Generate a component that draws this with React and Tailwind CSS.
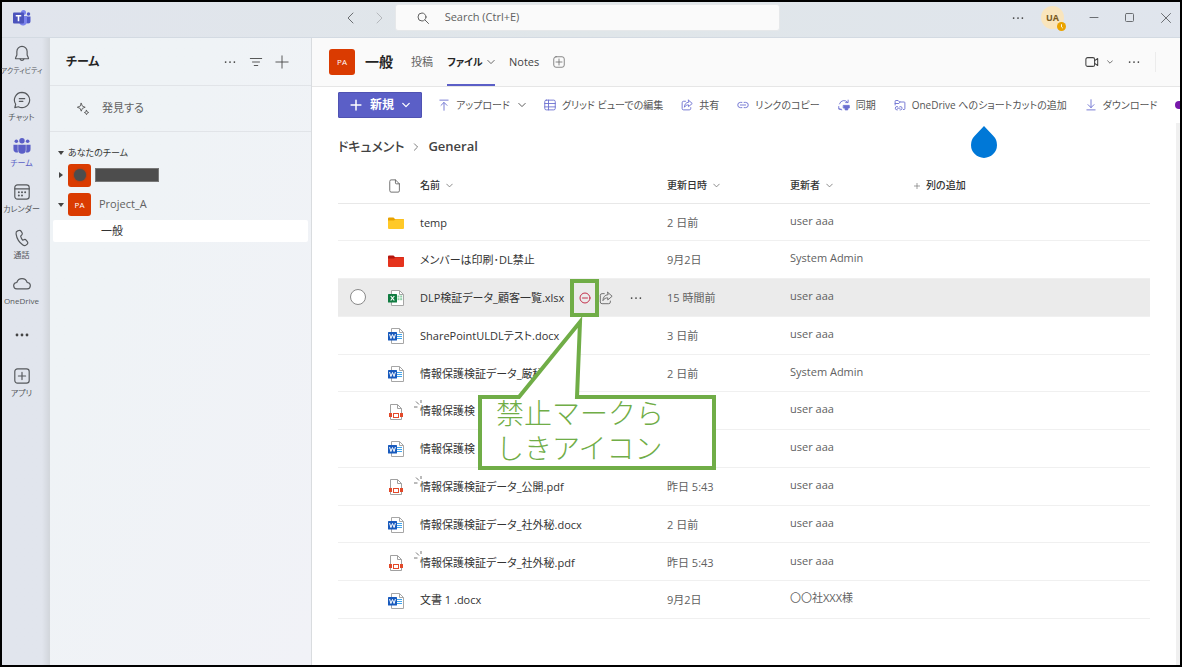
import React from "react";

function Ico({ size = "size-4", box = 16, sw = 1, className = "", children }) {
  return (
    <svg
      viewBox={`0 0 ${box} ${box}`}
      className={`${size} shrink-0 ${className}`}
      fill="none"
      stroke="currentColor"
      strokeWidth={sw}
      strokeLinecap="round"
      strokeLinejoin="round"
      aria-hidden="true"
    >
      {children}
    </svg>
  );
}

const Chevron = ({ className = "", sw = 1.2, size = "size-2" }) => (
  <Ico box={10} sw={sw} size={size} className={className}>
    <path d="M1 3l4 4 4-4" />
  </Ico>
);

const Dots = ({ size = "size-4", r = 1 }) => (
  <Ico size={size}>
    <g fill="currentColor" stroke="none">
      <circle cx="3" cy="8" r={r} />
      <circle cx="8" cy="8" r={r} />
      <circle cx="13" cy="8" r={r} />
    </g>
  </Ico>
);

function TeamsLogo() {
  return (
    <svg viewBox="0 0 36 32" className="h-4 w-[18px]" aria-hidden="true">
      <circle cx="31" cy="8" r="3.5" fill="#5059c9" />
      <path d="M25 13h10v9a5 5 0 0 1-10 0z" fill="#5059c9" />
      <circle cx="21" cy="5" r="5" fill="#7b83eb" />
      <path d="M13 12h15v11a8 8 0 0 1-15 4z" fill="#7b83eb" />
      <rect x="0" y="5" width="22" height="22" rx="2" fill="#4b53bc" />
      <path d="M5.500 10h11v3h-3.900v9.500H9.400V13H5.500z" fill="#fff" />
    </svg>
  );
}

const railItems = [
  {
    label: "アクティビティ",
    long: true,
    icon: (
      <>
        <path d="M10 1.500A5.700 5.700 0 0 0 4.300 7.200v4L2.800 14.500c-.2.400.1.800.6.800h13.200c.5 0 .8-.4.600-.8l-1.500-3.300v-4A5.700 5.700 0 0 0 10 1.500z" />
        <path d="M7.800 15.500a2.300 2.300 0 0 0 4.400 0" />
      </>
    ),
  },
  {
    label: "チャット",
    icon: (
      <>
        <path d="M10 1.500a8.500 8.500 0 1 1-4 16L2 18.500l1-3.800A8.500 8.500 0 0 1 10 1.500z" />
        <path d="M7 8.500h6M7 11.500h4" />
      </>
    ),
  },
  {
    label: "チーム",
    active: true,
    icon: (
      <g fill="currentColor" stroke="none">
        <circle cx="10" cy="4.200" r="3" />
        <circle cx="3.700" cy="4.800" r="2" />
        <circle cx="16.300" cy="4.800" r="2" />
        <path d="M5.800 8.500h8.400v6a4.200 4.200 0 0 1-8.400 0z" />
        <path d="M.5 8.500h4.700v6c0 1 .2 1.700.5 2.400A3.600 3.600 0 0 1 .5 13.500zM19.500 8.500h-4.700v6c0 1-.2 1.700-.5 2.400a3.600 3.600 0 0 0 5.200-3.400z" />
      </g>
    ),
  },
  {
    label: "カレンダー",
    icon: (
      <>
        <rect x="2" y="2" width="16" height="16" rx="3" />
        <path d="M2 6.500h16" />
        <g fill="currentColor" stroke="none">
          <circle cx="6.500" cy="10.200" r="1.100" />
          <circle cx="10" cy="10.200" r="1.100" />
          <circle cx="13.500" cy="10.200" r="1.100" />
          <circle cx="6.500" cy="14" r="1.100" />
          <circle cx="10" cy="14" r="1.100" />
        </g>
      </>
    ),
  },
  {
    label: "通話",
    icon: (
      <path d="M6.500 1.700l-1.300.4C3.800 2.600 3.200 3.900 3.400 5.400c.8 5.200 3.400 9.500 7.600 12.400 1.200.8 2.700.7 3.800-.2l1.100-.9c.7-.6.8-1.600.2-2.400l-1.500-1.900c-.5-.7-1.400-.9-2.200-.6l-1.700.5c-1.200-1.400-1.800-2.700-2.200-4.400l1.300-1.400c.6-.6.7-1.400.4-2.100L9.100 2.600c-.5-.8-1.600-1.200-2.600-.9z" />
    ),
  },
  {
    label: "OneDrive",
    icon: (
      <path d="M4.500 15.500a3.600 3.600 0 0 1-.3-7.200C5 5.800 7.200 4 10 4s5 1.800 5.800 4.300a3.600 3.600 0 0 1-.3 7.200z" />
    ),
  },
];

function Rail() {
  return (
    <nav
      aria-label="アプリ バー"
      className="z-10 flex w-12 shrink-0 flex-col border-r border-[#d3d7dc] bg-gradient-to-r from-[#e1e5ed] from-85% to-[#d3d7dd] pt-px"
    >
      {railItems.map((it) => (
        <button
          key={it.label}
          type="button"
          className={`flex h-[46px] flex-col items-center gap-[3px] pt-1.5 pr-2 ${it.active ? "text-[#5b5fc7]" : "text-[#55585c]"}`}
        >
          <Ico box={20} size="size-[18px]" sw={1.3}>
            {it.icon}
          </Ico>
          <span className={`leading-[10px] whitespace-nowrap ${it.long ? "text-[7px]" : "text-[8px]"}`}>
            {it.label}
          </span>
        </button>
      ))}
      <button
        type="button"
        aria-label="その他"
        className="flex h-[46px] justify-center pt-3 pr-2 text-[#444]"
      >
        <Dots r={1.4} />
      </button>
      <button
        type="button"
        className="flex h-[46px] flex-col items-center gap-[3px] pt-1.5 pr-2 text-[#55585c]"
      >
        <Ico box={20} size="size-[18px]" sw={1.3}>
          <rect x="2" y="2" width="16" height="16" rx="3" />
          <path d="M10 6v8M6 10h8" />
        </Ico>
        <span className="text-[8px] leading-[10px]">アプリ</span>
      </button>
    </nav>
  );
}

function TitleBar() {
  return (
    <header className="grid h-9 shrink-0 grid-cols-3 items-center border-b border-[#d3dae2] bg-gradient-to-r from-[#e1e5ed] via-[#e0e6e9] to-[#e0e5ed] pb-1">
      <div className="pl-[11px]">
        <TeamsLogo />
      </div>
      <div className="-mx-14 flex items-center pl-1.5">
        <div className="flex w-[50px] shrink-0 items-center gap-4 text-[#8a8d91]">
          <button type="button" aria-label="戻る" className="text-[#6b6e72]">
            <Ico size="size-3" box={12}>
              <path d="M8 1L3 6l5 5" />
            </Ico>
          </button>
          <button type="button" aria-label="進む" className="text-[#b5b8bc]">
            <Ico size="size-3" box={12}>
              <path d="M4 1l5 5-5 5" />
            </Ico>
          </button>
        </div>
        <label className="flex h-[27px] w-[385px] shrink-0 items-center gap-4 rounded-[3px] border border-[#e6e8ea] bg-[#fafafa] pl-[21px] text-[#616161]">
          <Ico size="size-3" box={12}>
            <circle cx="5" cy="5" r="4" />
            <path d="M8 8l3.500 3.500" />
          </Ico>
          <input
            type="search"
            aria-label="Search"
            placeholder="Search (Ctrl+E)"
            className="w-full bg-transparent text-[11px] outline-none placeholder:text-[#616161]"
          />
        </label>
      </div>
      <div className="flex items-center justify-end pr-2 text-[#6b6e72]">
        <button type="button" aria-label="設定など" className="mr-4 flex text-[#424242]">
          <Dots size="size-3.5" />
        </button>
        <button
          type="button"
          className="relative mr-6 flex size-[23px] items-center justify-center rounded-full bg-[#f9e5bd] text-[9px] font-bold text-[#7a5a1e]"
        >
          UA
          <svg viewBox="0 0 10 10" className="absolute -right-0.5 -bottom-0.5 size-[9px]" aria-hidden="true">
            <circle cx="5" cy="5" r="5" fill="#eaa300" />
            <path d="M5 2.500V5.500l1.500 1.300" stroke="#fff" fill="none" />
          </svg>
        </button>
        <button type="button" aria-label="最小化" className="mr-6">
          <Ico size="size-3" box={12}>
            <path d="M2 5.500h8" />
          </Ico>
        </button>
        <button type="button" aria-label="最大化" className="mr-6">
          <Ico size="size-3" box={12}>
            <rect x="1.500" y="1.500" width="8" height="8" rx="1" />
          </Ico>
        </button>
        <button type="button" aria-label="閉じる">
          <Ico size="size-3" box={12}>
            <path d="M1.500 1.500l9 9M10.500 1.500l-9 9" />
          </Ico>
        </button>
      </div>
    </header>
  );
}

const Caret = ({ open }) => (
  <svg viewBox="0 0 6 6" className="size-1.5 shrink-0" fill="#444" aria-hidden="true">
    {open ? <path d="M0 1h6L3 5z" /> : <path d="M1 0v6l4-3z" />}
  </svg>
);

function Sidebar() {
  return (
    <aside className="flex w-[262px] shrink-0 flex-col border-r border-[#d9dcdf] bg-gradient-to-br from-[#eff3f6] from-30% to-[#f1f2f7]">
      <div className="flex h-12 items-center border-b border-[#e1e4e8] pr-[22px] pl-4 text-[#424242]">
        <h1 className="flex-1 text-xs font-bold text-[#242424]">チーム</h1>
        <button type="button" aria-label="その他のオプション" className="mr-3">
          <Dots size="size-3.5" />
        </button>
        <button type="button" aria-label="フィルター" className="mr-3">
          <Ico size="size-3.5">
            <path d="M1.500 4h13M4 8h8M6 12h4" />
          </Ico>
        </button>
        <button type="button" aria-label="チームを追加">
          <Ico size="size-3.5">
            <path d="M8 1v14M1 8h14" />
          </Ico>
        </button>
      </div>
      <button
        type="button"
        className="flex h-[46px] items-center gap-3 border-b border-[#e1e4e8] pl-[26px] text-[11px] text-[#616161]"
      >
        <Ico size="size-3.5" className="text-[#555]">
          <path d="M6 1.500l1.300 3.200L10.500 6 7.300 7.300 6 10.500 4.700 7.300 1.500 6l3.200-1.300z" />
          <path d="M12 9.500l.8 1.700 1.700.8-1.700.8-.8 1.700-.8-1.700-1.700-.8 1.700-.8z" />
        </Ico>
        発見する
      </button>
      <div className="flex flex-col pt-[13px] text-[#616161]">
        <button type="button" className="flex h-4 items-center gap-1 pl-2 text-[9px] text-[#333]">
          <Caret open />
          あなたのチーム
        </button>
        <button type="button" aria-label="チーム" className="flex h-7 items-center gap-1 pl-2">
          <Caret />
          <span className="flex size-[23px] items-center justify-center rounded-[3px] bg-[#da3b01]">
            <span className="size-3 rounded-full bg-[#4d4d4d] shadow-[0_0_2px_#4d4d4d]" />
          </span>
          <span className="h-3.5 w-16 border border-[#777] bg-[#4d4d4d]" />
        </button>
        <button type="button" className="flex h-[31px] items-center gap-1 pl-2 text-[11px]">
          <Caret open />
          <span className="flex size-[23px] items-center justify-center rounded-[3px] bg-[#da3b01] text-[8px] text-white">
            PA
          </span>
          <span className="pl-1">Project_A</span>
        </button>
        <button
          type="button"
          className="mr-[3px] ml-[3px] flex h-[22px] items-center rounded-[2px] bg-white pl-12 text-[11px] text-[#333]"
        >
          一般
        </button>
      </div>
    </aside>
  );
}

function ChannelHeader() {
  return (
    <div className="flex h-[49px] shrink-0 items-stretch border-b border-[#e6e6e6] bg-[#fafafa] pr-6 pl-[17px] text-[#616161]">
      <span className="mr-2.5 flex size-[26px] items-center justify-center self-center rounded-[3px] bg-[#da3b01] text-[8px] text-white">
        PA
      </span>
      <h2 className="mr-[18px] self-center text-sm font-bold text-[#242424]">一般</h2>
      <button type="button" className="mr-3.5 text-[11px]">
        投稿
      </button>
      <button
        type="button"
        className="mr-3.5 flex w-12 items-center justify-between border-b-2 border-[#5b5fc7] pt-0.5 text-[10px] font-bold whitespace-nowrap text-[#242424]"
      >
        ファイル
        <Chevron className="text-[#616161]" />
      </button>
      <button type="button" className="mr-3.5 text-[11px] text-[#424242]">
        Notes
      </button>
      <button type="button" aria-label="タブを追加">
        <Ico size="size-3">
          <rect x="1" y="1" width="14" height="14" rx="3" />
          <path d="M8 4v8M4 8h8" />
        </Ico>
      </button>
      <div className="ml-auto flex items-center text-[#424242]">
        <button type="button" aria-label="会議" className="mr-2">
          <Ico size="size-3.5" sw={1.2}>
            <rect x="1" y="3" width="10" height="10" rx="2" />
            <path d="M11 6.500l3.500-2.500v8L11 9.500" />
          </Ico>
        </button>
        <button type="button" aria-label="会議のオプション" className="mr-3.5">
          <Chevron size="size-1.5" />
        </button>
        <button type="button" aria-label="その他のオプション" className="mr-3.5">
          <Dots size="size-3.5" />
        </button>
        <span className="h-5 w-px bg-[#ececec]" />
      </div>
    </div>
  );
}

const tools = [
  {
    label: "アップロード",
    menu: true,
    icon: <path d="M2.500 1.500h11M8 15V5M4 8.500l4-4 4 4" />,
  },
  {
    label: "グリッド ビューでの編集",
    icon: (
      <>
        <rect x="1" y="1.500" width="14" height="13" rx="2" />
        <path d="M1 6h14M1 10.500h14M6 1.500v13" />
      </>
    ),
  },
  {
    label: "共有",
    icon: (
      <>
        <path d="M6 3H3.500A2 2 0 0 0 1.500 5v7.500a2 2 0 0 0 2 2H11a2 2 0 0 0 2-2V11.500" />
        <path d="M10 1.500L15 6l-5 4.200V7.800C7.500 7.800 6 8.700 4.500 11 4.700 7 6.500 4.600 10 4.200z" />
      </>
    ),
  },
  {
    label: "リンクのコピー",
    icon: (
      <path d="M6.500 4.500h-2a3.500 3.500 0 0 0 0 7h2M9.500 4.500h2a3.500 3.500 0 0 1 0 7h-2M4.500 8h7" />
    ),
  },
  {
    label: "同期",
    icon: (
      <>
        <path d="M2 6.500A6.300 6.300 0 0 1 13 4.500M13.500 1.500v3.300h-3.300M1 10v3.500h3M1.500 13A6 6 0 0 0 5 14.500" />
        <path d="M7.500 8.500H15V12h-2v2.500H9.500V12h-2z" fill="currentColor" />
      </>
    ),
  },
  {
    label: "OneDrive へのショートカットの追加",
    icon: (
      <>
        <path d="M1.500 8V3a1 1 0 0 1 1-1h3l2 2h6a1 1 0 0 1 1 1v8a1 1 0 0 1-1 1h-1M1.500 6h5l1.500-2" />
        <path d="M4.500 10H4a2.200 2.200 0 0 0 0 4.500h.5M8 10h.5a2.200 2.200 0 0 1 0 4.500H8M4.500 12.200h3.500" />
      </>
    ),
  },
  {
    label: "ダウンロード",
    icon: <path d="M2.500 14.500h11M8 1v10.500M4 7.500l4 4 4-4" />,
  },
];

function Toolbar() {
  return (
    <div
      role="toolbar"
      aria-label="ファイル操作"
      className="flex h-9 shrink-0 items-center gap-[18px] overflow-hidden pl-[26px] text-[10px] text-[#555]"
    >
      <button
        type="button"
        className="-mr-0.5 flex h-[26px] w-[84px] shrink-0 items-center justify-center gap-2 rounded-[1px] border border-[#4f52b2] bg-[#5b5fc7] text-xs font-bold text-white"
      >
        <Ico size="size-3" sw={2}>
          <path d="M8 1.500v13M1.500 8h13" />
        </Ico>
        新規
        <Chevron sw={1.600} />
      </button>
      {tools.map((t) => (
        <button key={t.label} type="button" className="flex shrink-0 items-center gap-1.5 whitespace-nowrap">
          <Ico size="size-3" className="text-[#6b6fd0]" sw={1.2}>
            {t.icon}
          </Ico>
          {t.label}
          {t.menu && <Chevron className="ml-0.5" />}
        </button>
      ))}
      <span className="size-2 shrink-0 rounded-full bg-[#7719aa]" />
    </div>
  );
}

function FolderIcon({ red }) {
  return (
    <svg viewBox="0 0 16 12" className="h-3 w-4" aria-hidden="true">
      <path d="M0 1.500A1 1 0 0 1 1 .5h4.500L7 2h8a1 1 0 0 1 1 1v3H0z" fill={red ? "#b3170f" : "#e8a200"} />
      <path d="M0 3.500h6L7.500 2.300H16V11a1 1 0 0 1-1 1H1a1 1 0 0 1-1-1z" fill={red ? "#e5331d" : "#ffc928"} />
    </svg>
  );
}

function OfficeIcon({ excel }) {
  return (
    <svg viewBox="0 0 16 16" className="size-4" aria-hidden="true">
      <path d="M3.500.5h8l4 4v11h-12z" fill="#fff" stroke="#a6a6a6" />
      <path d="M11.500.5v4h4" fill="none" stroke="#a6a6a6" />
      {excel ? (
        <g fill="#8fd0a8">
          <rect x="9.500" y="5.500" width="2" height="2" />
          <rect x="12.200" y="5.500" width="2" height="2" />
          <rect x="9.500" y="8.200" width="2" height="2" />
          <rect x="12.200" y="8.200" width="2" height="2" />
        </g>
      ) : (
        <path d="M9 6.500h5M9 8.500h5M9 10.500h5" stroke="#41a5ee" />
      )}
      <rect x="0" y="4" width="9" height="8.500" rx=".6" fill={excel ? "#107c41" : "#185abd"} />
      {excel ? (
        <path d="M2.700 6l3.600 4.500M6.300 6l-3.600 4.500" stroke="#fff" strokeWidth="1.200" />
      ) : (
        <path d="M1.600 6l1.300 4.500 1.600-4 1.600 4L7.400 6" stroke="#fff" fill="none" />
      )}
    </svg>
  );
}

function PdfIcon() {
  return (
    <svg viewBox="0 0 16 16" className="size-4" aria-hidden="true">
      <path d="M2.500 15.500V.5h7l4 4v11z" fill="#fff" stroke="#a0a0a0" />
      <path d="M9.500.5v4h4" fill="none" stroke="#a0a0a0" />
      <rect x="1" y="9" width="3" height="4" fill="#e2492a" />
      <rect x="12" y="9" width="3" height="4" fill="#e2492a" />
      <rect x="4" y="9" width="8" height="5" fill="#fff" />
      <rect x="5.500" y="9.500" width="5" height="4" fill="#fff" stroke="#e2492a" />
    </svg>
  );
}

const icons = {
  folder: <FolderIcon />,
  red: <FolderIcon red />,
  xlsx: <OfficeIcon excel />,
  docx: <OfficeIcon />,
  pdf: <PdfIcon />,
};

const files = [
  { kind: "folder", name: "temp", date: "2 日前", by: "user aaa" },
  { kind: "red", name: "メンバーは印刷･DL禁止", date: "9月2日", by: "System Admin" },
  { kind: "xlsx", name: "DLP検証データ_顧客一覧.xlsx", date: "15 時間前", by: "user aaa", hover: true },
  { kind: "docx", name: "SharePointULDLテスト.docx", date: "3 日前", by: "user aaa" },
  { kind: "docx", name: "情報保護検証データ_厳秘.docx", date: "2 日前", by: "System Admin" },
  { kind: "pdf", name: "情報保護検", by: "user aaa", isNew: true },
  { kind: "docx", name: "情報保護検", by: "user aaa" },
  { kind: "pdf", name: "情報保護検証データ_公開.pdf", date: "昨日 5:43", by: "user aaa", isNew: true },
  { kind: "docx", name: "情報保護検証データ_社外秘.docx", date: "2 日前", by: "user aaa" },
  { kind: "pdf", name: "情報保護検証データ_社外秘.pdf", date: "昨日 5:43", by: "user aaa", isNew: true },
  { kind: "docx", name: "文書 1 .docx", date: "9月2日", by: "〇〇社XXX様" },
];

function Callout() {
  return (
    <>
      <span className="pointer-events-none absolute top-0 left-[150px] h-[38px] w-[29px] border-4 border-[#70ad47]" />
      <div className="pointer-events-none absolute top-[38px] left-[57px] z-10 h-[154px] w-[240px]">
        <svg viewBox="0 0 240 154" className="absolute inset-0 size-full" aria-hidden="true">
          <path
            d="M3 80H42L103 5L100 80H237V151H3z"
            fill="#fff"
            stroke="#70ad47"
            strokeWidth="4"
          />
        </svg>
        <p className="relative pt-[79px] pl-[19px] text-[28px] leading-[35px] font-light whitespace-nowrap text-[#70ad47] [font-feature-settings:normal]">
          禁止マークら
          <br />
          しきアイコン
        </p>
      </div>
    </>
  );
}

function FileRow({ f }) {
  return (
    <tr className={`border-b border-[#f0f0f0] ${f.hover ? "bg-[#ebebeb]" : ""}`}>
      <td className="p-0 pl-3">
        {f.hover && (
          <input
            type="radio"
            aria-label={f.name}
            className="block size-4 appearance-none rounded-full border border-[#8a8a8a] bg-white"
          />
        )}
      </td>
      <td className="p-0 pt-0.5">{icons[f.kind]}</td>
      <td className="relative p-0 pt-0.5 text-[#333]">
        <div className="flex items-center whitespace-nowrap">
          {f.isNew && (
            <svg viewBox="0 0 8 8" className="absolute top-2 -left-1.5 size-2" stroke="#777" aria-hidden="true">
              <path d="M7 0v3M2 1.500l3 3M0 7h3.500" />
            </svg>
          )}
          <a href="#file" className={f.hover ? "w-[159px]" : ""}>
            {f.name}
          </a>
          {f.hover && (
            <>
              <Ico size="size-3" box={12} className="text-[#c4314b]">
                <circle cx="6" cy="6" r="5" />
                <path d="M3.500 6h5" />
              </Ico>
              <button type="button" aria-label="共有" className="ml-2 text-[#616161]">
                <Ico size="size-3.5">{tools[2].icon}</Ico>
              </button>
              <button type="button" aria-label="その他の操作" className="ml-4 text-[#424242]">
                <Dots size="size-3.5" />
              </button>
            </>
          )}
        </div>
        {f.hover && <Callout />}
      </td>
      <td className="p-0 pt-0.5">{f.date}</td>
      <td className="p-0 pb-0.5">{f.by}</td>
      <td className="p-0" />
    </tr>
  );
}

function FileTable() {
  return (
    <table className="h-[452px] w-full table-fixed border-collapse text-left text-[11px] text-[#616161]">
      <colgroup>
        <col className="w-[50px]" />
        <col className="w-8" />
        <col className="w-[247px]" />
        <col className="w-[123px]" />
        <col className="w-[124px]" />
        <col />
      </colgroup>
      <thead>
        <tr className="h-9 border-b border-[#e8e8e8] text-[10px] text-[#333]">
          <th className="p-0" />
          <th className="p-0 pt-0.5">
            <Ico size="size-3.5" className="text-[#616161]">
              <path d="M2 2.500a1.500 1.500 0 0 1 1.500-1.500h5L13 5.500v8a1.500 1.500 0 0 1-1.500 1.500h-8A1.500 1.500 0 0 1 2 13.500zM8.500 1v3.500a1 1 0 0 0 1 1H13" />
            </Ico>
          </th>
          {["名前", "更新日時", "更新者"].map((h) => (
            <th key={h} className="p-0 pt-0.5 font-medium">
              <button type="button" className="flex items-center gap-1.5">
                {h}
                <Chevron className="text-[#777]" size="size-[7px]" />
              </button>
            </th>
          ))}
          <th className="p-0 pt-0.5 font-medium">
            <button type="button" className="flex items-center gap-1.5">
              <Ico size="size-1.5" box={6} sw={0.7} className="text-[#777]">
                <path d="M3 0v6M0 3h6" />
              </Ico>
              列の追加
            </button>
          </th>
        </tr>
      </thead>
      <tbody>
        {files.map((f, i) => (
          <FileRow key={i} f={f} />
        ))}
      </tbody>
    </table>
  );
}

export default function App() {
  return (
    <div className="flex min-h-screen flex-col border-2 border-black bg-white font-['Open_Sans','Noto_Sans_CJK_JP',sans-serif] [font-feature-settings:'palt']">
      <TitleBar />
      <div className="flex flex-1">
        <Rail />
        <Sidebar />
        <main className="flex min-w-0 flex-1 flex-col">
          <ChannelHeader />
          <Toolbar />
          <div className="relative flex flex-1 flex-col border-r-4 border-[#f0f0f0] pr-[26px] pl-[26px]">
            <svg
              viewBox="0 0 26 32"
              className="absolute top-[3px] left-[659px] h-8 w-[26px]"
              fill="#0078d7"
              aria-hidden="true"
            >
              <path d="M13 0l9.200 9.700a13 13 0 1 1-18.400 0z" />
            </svg>
            <nav aria-label="階層リンク" className="flex h-11 items-center gap-2 pt-1 text-[13px] text-[#424242]">
              <a href="#documents" className="font-medium">
                ドキュメント
              </a>
              <Chevron className="-rotate-90 text-[#777]" />
              <span className="font-semibold">General</span>
            </nav>
            <FileTable />
          </div>
        </main>
      </div>
    </div>
  );
}
